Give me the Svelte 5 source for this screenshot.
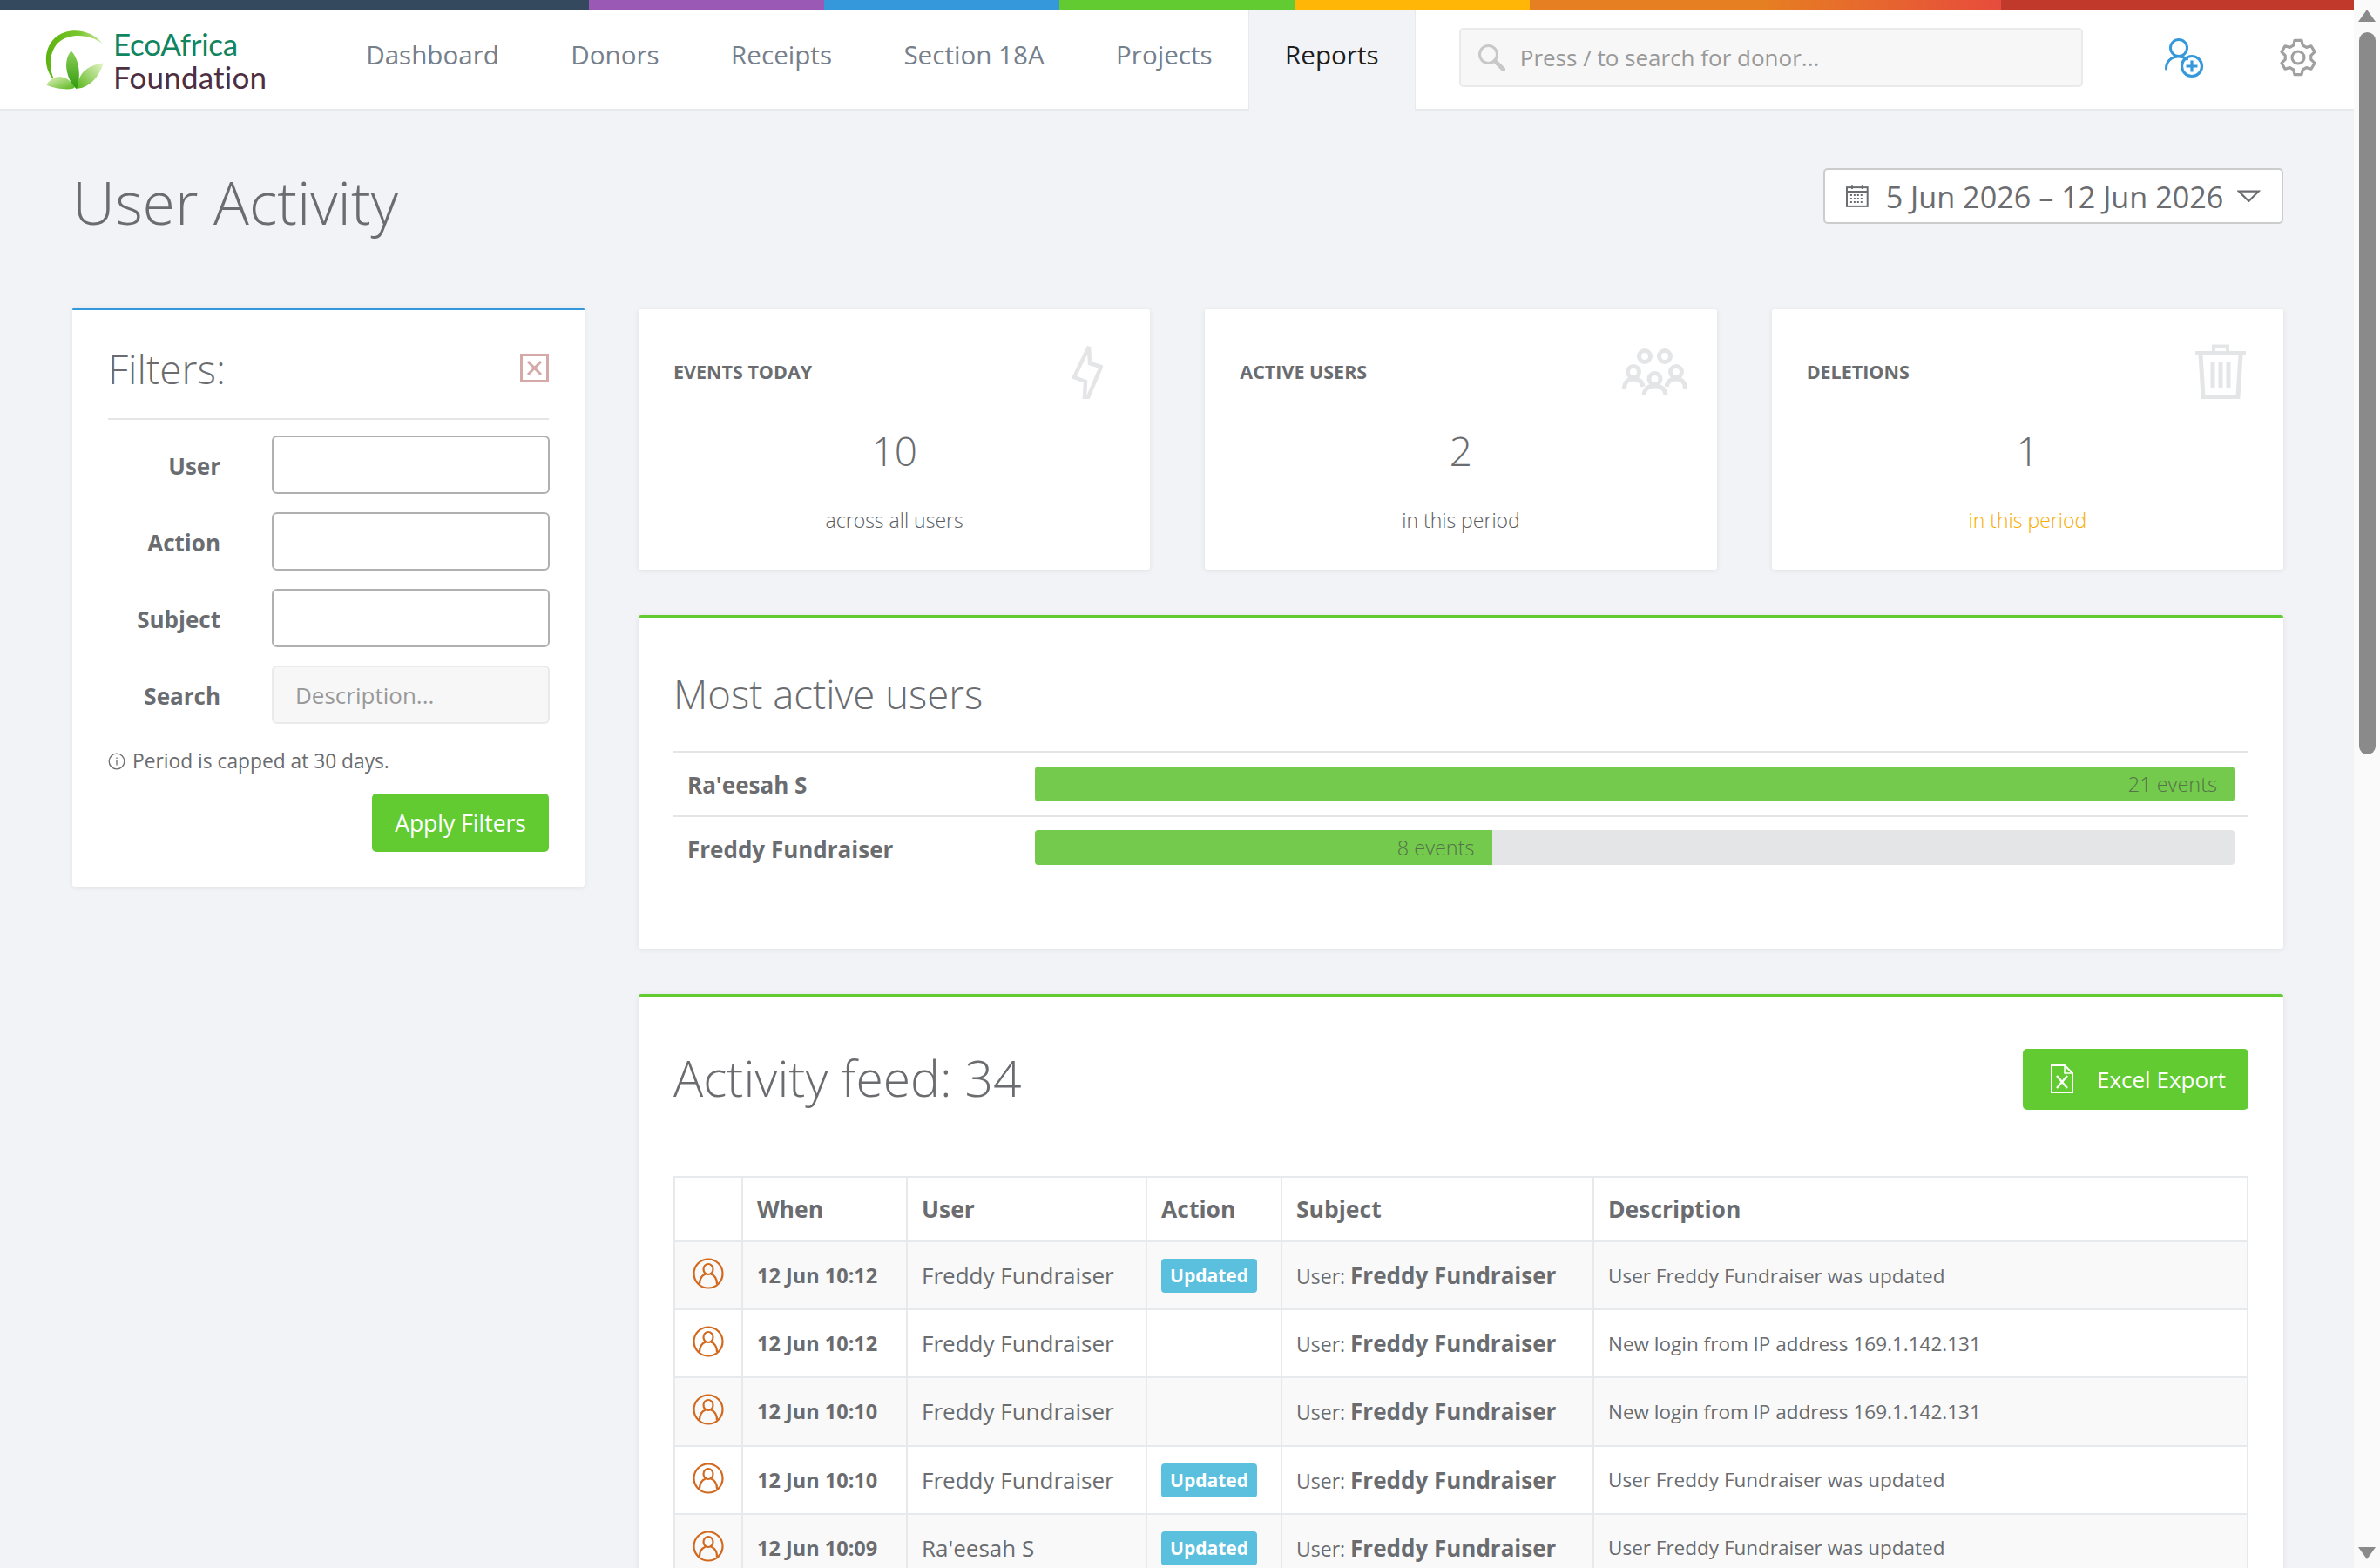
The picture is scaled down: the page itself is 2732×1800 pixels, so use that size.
<script>
	const navItems = ['Dashboard', 'Donors', 'Receipts', 'Section 18A', 'Projects', 'Reports'];

	const stats = [
		{ label: 'Events today', value: 10, note: 'across all users', icon: 'zap' },
		{ label: 'Active users', value: 2, note: 'in this period', icon: 'users' },
		{ label: 'Deletions', value: 1, note: 'in this period', icon: 'trash', warn: true }
	];

	const activeUsers = [
		{ name: "Ra'eesah S", events: 21 },
		{ name: 'Freddy Fundraiser', events: 8 }
	];
	const maxEvents = 21;

	const updated = 'User Freddy Fundraiser was updated';
	const login = 'New login from IP address 169.1.142.131';
	const feed = [
		{ when: '12 Jun 10:12', user: 'Freddy Fundraiser', action: 'Updated', desc: updated },
		{ when: '12 Jun 10:12', user: 'Freddy Fundraiser', action: '', desc: login },
		{ when: '12 Jun 10:10', user: 'Freddy Fundraiser', action: '', desc: login },
		{ when: '12 Jun 10:10', user: 'Freddy Fundraiser', action: 'Updated', desc: updated },
		{ when: '12 Jun 10:09', user: "Ra'eesah S", action: 'Updated', desc: updated }
	];

	// six-tooth cog outline, first tooth at twelve o'clock
	function gearPath(cx, cy, outer, inner) {
		const pts = [];
		for (let i = 0; i < 6; i++) {
			const a = (i * Math.PI) / 3 - Math.PI / 2;
			pts.push([a - 0.36, inner], [a - 0.2, outer], [a + 0.2, outer], [a + 0.36, inner]);
		}
		return (
			pts
				.map(([a, r], i) => `${i ? 'L' : 'M'}${(cx + r * Math.cos(a)).toFixed(1)} ${(cy + r * Math.sin(a)).toFixed(1)}`)
				.join(' ') + ' Z'
		);
	}
</script>

<div class="window">
	<div class="page">
		<div class="color-line"></div>

		<header class="topbar">
			<div class="logo">
				<svg class="logo-mark" viewBox="60 50 210 215" width="70" height="72">
					<defs>
						<linearGradient id="arc" x1="0" y1="0" x2="1" y2="0">
							<stop offset="0" stop-color="#5cb30f" />
							<stop offset="0.6" stop-color="#7cc72e" />
							<stop offset="1" stop-color="#cfe8a8" />
						</linearGradient>
						<linearGradient id="leafMid" x1="0" y1="0" x2="0" y2="1">
							<stop offset="0" stop-color="#8ed05a" />
							<stop offset="1" stop-color="#2e9a0c" />
						</linearGradient>
						<linearGradient id="leafSide" x1="1" y1="0" x2="0" y2="1">
							<stop offset="0" stop-color="#e6f5c8" />
							<stop offset="1" stop-color="#5db820" />
						</linearGradient>
						<linearGradient id="leafLeft" x1="0" y1="0" x2="1" y2="1">
							<stop offset="0" stop-color="#e2f3c0" />
							<stop offset="1" stop-color="#58b51c" />
						</linearGradient>
					</defs>
					<path d="M100 232 C58 190 58 118 100 80 C145 42 225 50 264 102 C222 68 150 62 110 98 C78 130 76 190 100 232 Z" fill="url(#arc)" />
					<path d="M70 243 C95 205 135 205 165 246 C180 262 110 262 70 243 Z" fill="url(#leafLeft)" />
					<path d="M178 256 C175 210 205 175 266 168 C250 215 222 250 178 256 Z" fill="url(#leafSide)" />
					<path d="M155 125 C178 150 192 200 175 258 C150 240 118 170 155 125 Z" fill="url(#leafMid)" />
				</svg>
				<div class="logo-text">
					<span class="eco">EcoAfrica</span>
					<span class="foundation">Foundation</span>
				</div>
			</div>

			<nav class="nav">
				{#each navItems as item}
					<a href="#top" class:active={item === 'Reports'}>{item}</a>
				{/each}
			</nav>

			<div class="search">
				<svg viewBox="0 0 32 32" width="32" height="32" fill="none" stroke="#c8c8c8">
					<circle cx="12.500" cy="12.500" r="10" stroke-width="3" />
					<path d="M20 20l10 10" stroke-width="5" stroke-linecap="round" />
				</svg>
				<span>Press / to search for donor...</span>
			</div>

			<div class="top-icons">
				<svg viewBox="0 0 46 46" width="46" height="46" fill="none" stroke="#3498db" stroke-width="3">
					<circle cx="17" cy="11" r="9.500" />
					<path d="M2.500 35c0-9 6.500-14 14.500-14 3.500 0 7 1 9.500 3" stroke-linecap="round" />
					<circle cx="32" cy="32" r="11.500" stroke-width="3.200" />
					<path d="M32 25.500v13M25.500 32h13" stroke-width="3.200" />
				</svg>
				<svg viewBox="0 0 44 44" width="44" height="44" fill="none" stroke="#a0a0a0" stroke-width="3.200">
					<path d={gearPath(22, 22, 20, 15)} stroke-linejoin="round" />
					<circle cx="22" cy="22" r="7" />
				</svg>
			</div>
		</header>

		<main class="content">
			<div class="title-row">
				<h1>User Activity</h1>
				<button class="date-btn">
					<svg viewBox="0 0 26 26" width="26" height="26" fill="none" stroke="#6a6c6f" stroke-width="2">
						<rect x="1" y="3" width="24" height="22" />
						<path d="M1 8h24M7 0v5M19 0v5" />
						<path d="M5 12h16M5 16h16M5 20h16" stroke-dasharray="2 2" />
					</svg>
					<span>5 Jun 2026 – 12 Jun 2026</span>
					<svg viewBox="0 0 27 14" width="27" height="14" fill="none" stroke="#6a6c6f" stroke-width="2.200">
						<path d="M2 1.500h23L13.500 13Z" />
					</svg>
				</button>
			</div>

			<div class="columns">
				<aside class="panel filters">
					<div class="filters-head">
						<h2>Filters:</h2>
						<svg viewBox="0 0 33 33" width="33" height="33" fill="none" stroke="#d6a9a9" stroke-width="3">
							<rect x="1.500" y="1.500" width="30" height="30" />
							<path d="M9 9l15 15M24 9L9 24" />
						</svg>
					</div>
					<div class="field"><label for="f-user">User</label><input id="f-user" /></div>
					<div class="field"><label for="f-action">Action</label><input id="f-action" /></div>
					<div class="field"><label for="f-subject">Subject</label><input id="f-subject" /></div>
					<div class="field">
						<label for="f-search">Search</label>
						<input id="f-search" class="soft" placeholder="Description..." />
					</div>
					<p class="hint">
						<svg viewBox="0 0 20 20" width="20" height="20" fill="none" stroke="#6a6c6f" stroke-width="1.300">
							<circle cx="10" cy="10" r="8.800" />
							<path d="M10 8.500v6M10 5.500v1.600" />
						</svg>
						Period is capped at 30 days.
					</p>
					<div class="apply"><button class="btn-green">Apply Filters</button></div>
				</aside>

				<div class="main-col">
					<div class="stats">
						{#each stats as s}
							<section class="stat">
								<div class="stat-head">
									<h4>{s.label}</h4>
									{#if s.icon === 'zap'}
										<svg class="zap" viewBox="0 0 36 63" width="36" height="63" fill="none" stroke="#e4e5e7" stroke-width="4.500">
											<path d="M20 3L3 38l13 5-1 18h4l15-35-13-4z" />
										</svg>
									{:else if s.icon === 'users'}
										<svg class="people" viewBox="0 0 75 54" width="75" height="54" fill="none" stroke="#e4e5e7" stroke-width="5">
											<circle cx="26" cy="9" r="6.500" />
											<circle cx="49" cy="9" r="6.500" />
											<circle cx="13" cy="27" r="6.500" />
											<circle cx="62" cy="27" r="6.500" />
											<circle cx="37.500" cy="35" r="6.500" />
											<path d="M2.500 46c0-7 4.500-11 10.500-11s10 3 11 9M51 44c1-6 5-9 11-9s10.500 4 10.500 11M25 54c0-7 5-11 12.500-11S50 47 50 54" />
										</svg>
									{:else}
										<svg class="bin" viewBox="0 0 58 63" width="58" height="63" fill="none" stroke="#e4e5e7">
											<path d="M0 10.500h58" stroke-width="5" />
											<path d="M21 8V2.500h16V8" stroke-width="4" />
											<path d="M6 12l3 48.500h40L52 12" stroke-width="5" />
											<path d="M20 21v29M29 21v29M38 21v29" stroke-width="5" />
										</svg>
									{/if}
								</div>
								<div class="stat-value">{s.value}</div>
								<div class="stat-note" class:warn={s.warn}>{s.note}</div>
							</section>
						{/each}
					</div>

					<section class="panel green most-active">
						<h3>Most active users</h3>
						<div class="bars">
							{#each activeUsers as u}
								<div class="bar-row">
									<strong>{u.name}</strong>
									<div class="track">
										<div class="fill" style="width: {(u.events / maxEvents) * 100}%">{u.events} events</div>
									</div>
								</div>
							{/each}
						</div>
					</section>

					<section class="panel green feed">
						<div class="feed-head">
							<h3>Activity feed: 34</h3>
							<button class="btn-green export">
								<svg viewBox="0 0 26 33" width="26" height="33" fill="none" stroke="#fff" stroke-width="2">
									<path d="M1 1h15l9 9v22H1z" />
									<path d="M16 1v9h9" stroke-width="1.500" />
									<path d="M7 13l12 14M19 13L7 27" stroke-width="2.400" />
								</svg>
								Excel Export
							</button>
						</div>
						<table>
							<colgroup>
								<col style="width: 78px" />
								<col style="width: 189px" />
								<col style="width: 275px" />
								<col style="width: 155px" />
								<col style="width: 358px" />
								<col />
							</colgroup>
							<thead>
								<tr><th></th><th>When</th><th>User</th><th>Action</th><th>Subject</th><th>Description</th></tr>
							</thead>
							<tbody>
								{#each feed as row}
									<tr>
										<td class="avatar">
											<svg viewBox="0 0 36 36" width="36" height="36" fill="none" stroke="#d2691e" stroke-width="2.200">
												<circle cx="18" cy="18" r="16.500" />
												<ellipse cx="18" cy="13" rx="5.500" ry="6" />
												<path d="M8 30c0-6 3-10 7-11.500M28 30c0-6-3-10-7-11.500" />
											</svg>
										</td>
										<td class="when">{row.when}</td>
										<td class="user">{row.user}</td>
										<td>{#if row.action}<span class="badge">{row.action}</span>{/if}</td>
										<td class="subject">User: <b>Freddy Fundraiser</b></td>
										<td class="desc">{row.desc}</td>
									</tr>
								{/each}
							</tbody>
						</table>
					</section>
				</div>
			</div>
		</main>
	</div>

	<div class="scrollbar" aria-hidden="true">
		<div class="arrow up"></div>
		<div class="thumb"></div>
		<div class="arrow down"></div>
	</div>
</div>

<style>
	:global(body) {
		margin: 0;
		background: #f1f3f6;
	}

	.window {
		display: flex;
		height: 1800px;
		overflow: hidden;
		font-family: 'Open Sans', sans-serif;
		font-size: 23px;
		color: #6a6c6f;
	}

	.page {
		flex: 1;
		min-width: 0;
		overflow: hidden;
	}

	.color-line {
		height: 12px;
		background: linear-gradient(
			to right,
			#34495e 25%,
			#9b59b6 25%,
			#9b59b6 35%,
			#3498db 35%,
			#3498db 45%,
			#62cb31 45%,
			#62cb31 55%,
			#ffb606 55%,
			#ffb606 65%,
			#e67e22 65%,
			#e67e22 75%,
			#e74c3c 85%,
			#c0392b 85%,
			#c0392b 100%
		);
	}

	.topbar {
		display: flex;
		align-items: stretch;
		height: 113px;
		background: #fff;
		border-bottom: 2px solid #e7eaec;
	}

	.logo {
		width: 379px;
		padding-left: 50px;
		box-sizing: border-box;
		display: flex;
		align-items: center;
		gap: 10px;
	}

	.logo-text {
		display: flex;
		flex-direction: column;
		font-family: Lato, sans-serif;
		font-size: 35px;
		line-height: 38px;
	}

	.eco {
		color: #0f8560;
		letter-spacing: -0.3px;
	}

	.foundation {
		color: #4d2f42;
		letter-spacing: 0.2px;
	}

	.nav {
		display: flex;
		margin-bottom: -2px;
	}

	.nav a {
		display: flex;
		align-items: center;
		padding: 0 41.200px 14px;
		font-size: 29.600px;
		color: #76808c;
		text-decoration: none;
	}

	.nav a.active {
		color: #1f1f1f;
		background: #f1f3f6;
		border-left: 1px solid #e7eaec;
		border-right: 1px solid #e7eaec;
	}

	.search {
		width: 716px;
		height: 68px;
		margin: 20px 0 0 50px;
		box-sizing: border-box;
		display: flex;
		align-items: center;
		gap: 17px;
		padding-left: 19px;
		background: #f7f7f7;
		border: 2px solid #e9eaeb;
		border-radius: 5px;
		font-size: 26px;
		color: #999;
	}

	.top-icons {
		display: flex;
		gap: 86px;
		margin-left: 93px;
		padding-top: 32px;
		align-items: flex-start;
	}

	.content {
		padding: 0 81px 0 83px;
	}

	.title-row {
		display: flex;
		justify-content: space-between;
		align-items: flex-start;
		height: 226px;
	}

	h1 {
		margin: 64px 0 0;
		font-size: 68px;
		font-weight: 300;
		line-height: 82px;
	}

	.date-btn {
		margin-top: 66px;
		width: 528px;
		height: 64px;
		display: flex;
		align-items: center;
		gap: 16px;
		padding: 0 24px;
		box-sizing: border-box;
		background: #fff;
		border: 2px solid #ccc;
		border-radius: 5px;
		font: inherit;
		font-size: 34.200px;
		color: #6a6c6f;
		white-space: nowrap;
	}

	.date-btn span {
		margin-left: 4px;
	}

	.columns {
		display: grid;
		grid-template-columns: 588px 1fr;
		gap: 62px;
		align-items: start;
	}

	.panel {
		background: #fff;
		border-top: 3px solid #3498db;
		border-radius: 3px;
		box-shadow: 0 1px 6px rgba(0, 0, 0, 0.08);
		box-sizing: border-box;
	}

	.panel.green {
		border-top-color: #62cb31;
	}

	.filters {
		height: 665px;
		padding: 0 41px;
	}

	.filters-head {
		display: flex;
		justify-content: space-between;
		align-items: center;
		height: 126px;
		padding-top: 9px;
		box-sizing: border-box;
		margin-bottom: 18px;
		border-bottom: 2px solid #e4e5e7;
	}

	h2 {
		margin: 0;
		font-size: 46px;
		font-weight: 300;
	}

	.field {
		display: grid;
		grid-template-columns: 129px 319px;
		gap: 59px;
		align-items: center;
		margin-bottom: 21px;
	}

	.field label {
		padding-top: 3px;
		text-align: right;
		font-size: 26px;
		font-weight: 700;
	}

	.field input {
		height: 67px;
		box-sizing: border-box;
		padding: 0 25px;
		background: #fff;
		border: 2px solid #b0b0b0;
		border-radius: 6px;
		font: inherit;
		font-size: 26px;
		outline: none;
	}

	.field input.soft {
		background: #f7f7f7;
		border-color: #e9eaeb;
	}

	.field input::placeholder {
		color: #999;
	}

	.hint {
		display: flex;
		align-items: center;
		gap: 8px;
		margin: 0;
		padding-top: 6px;
		font-size: 22.750px;
		color: #6a6c6f;
	}

	.apply {
		display: flex;
		justify-content: flex-end;
		margin-top: 22px;
	}

	.btn-green {
		height: 67px;
		padding: 0 26px;
		background: #62cb31;
		border: 0;
		border-radius: 5px;
		font: inherit;
		font-size: 26.500px;
		color: #fff;
	}

	.stats {
		display: grid;
		grid-template-columns: repeat(3, 1fr);
		gap: 63px;
		margin: 2px 0 52px;
	}

	.stat {
		height: 299px;
		padding: 0 40px;
		box-sizing: border-box;
		background: #fff;
		border-radius: 3px;
		box-shadow: 0 1px 6px rgba(0, 0, 0, 0.08);
		text-align: center;
	}

	.stat-head {
		position: relative;
		height: 132px;
	}

	h4 {
		margin: 0;
		padding-top: 57px;
		text-align: left;
		font-size: 21.500px;
		font-weight: 700;
		text-transform: uppercase;
	}

	/* stat icons sit over the card corner */
	.stat-head svg {
		position: absolute;
		top: 40px;
		right: 14px;
	}

	.stat-head .people {
		top: 45px;
		right: -6px;
	}

	.stat-head .bin {
		right: 3px;
	}

	.stat-value {
		font-size: 46px;
		font-weight: 300;
		line-height: 60px;
	}

	.stat-note {
		margin-top: 34px;
		font-size: 23px;
		font-weight: 300;
		line-height: 32px;
		color: #5a5c5f;
	}

	.stat-note.warn {
		color: #f7ad00;
	}

	.most-active {
		height: 383px;
		padding: 0 40px;
		margin-bottom: 52px;
	}

	h3 {
		margin: 0;
		font-weight: 300;
		font-size: 45.500px;
	}

	.most-active h3 {
		padding-top: 55px;
		line-height: 64px;
		margin-bottom: 34px;
	}

	.bars {
		border-top: 2px solid #e4e5e7;
	}

	.bar-row {
		display: grid;
		grid-template-columns: 399px 1fr;
		align-items: center;
		height: 71.500px;
		padding: 0 16px;
		font-size: 26px;
	}

	.bar-row strong {
		padding-top: 3px;
	}

	.bar-row + .bar-row {
		border-top: 2px solid #e4e5e7;
	}

	.track {
		height: 40px;
		background: #e4e5e7;
		border-radius: 4px;
		overflow: hidden;
	}

	.fill {
		height: 100%;
		box-sizing: border-box;
		padding-right: 20px;
		background: #74ca4c;
		text-align: right;
		font-size: 23.500px;
		line-height: 40px;
		color: #55734a;
		font-weight: 300;
	}

	.feed {
		padding: 0 40px;
		min-height: 800px;
	}

	.feed-head {
		display: flex;
		justify-content: space-between;
		align-items: center;
		padding-top: 57px;
		margin-bottom: 74px;
	}

	.feed-head h3 {
		margin-top: -3px;
		font-size: 57px;
	}

	.export {
		display: flex;
		align-items: center;
		gap: 27px;
		width: 259px;
		height: 70px;
		padding: 0 0 0 32px;
		box-sizing: border-box;
		font-size: 26px;
	}

	table {
		width: 100%;
		border-collapse: collapse;
		table-layout: fixed;
	}

	th,
	td {
		box-sizing: border-box;
		border: 2px solid #e7eaec;
		padding: 0 16px;
		text-align: left;
	}

	th {
		height: 74px;
		font-size: 26.500px;
		font-weight: 700;
		background: #fff;
	}

	td {
		height: 78.200px;
		font-size: 26px;
	}

	tbody tr:nth-child(odd) td {
		background: #f9f9f9;
	}

	tbody tr:nth-child(even) td {
		background: #fff;
	}

	.avatar {
		padding: 0 0 4px 20px;
	}

	.avatar svg {
		display: block;
	}

	.when {
		font-size: 23.500px;
		font-weight: 700;
	}

	.subject {
		font-size: 23px;
	}

	.subject b {
		font-size: 26px;
		font-weight: 700;
	}

	.desc {
		font-size: 22.500px;
	}

	.badge {
		display: inline-block;
		width: 110px;
		line-height: 39px;
		text-align: center;
		background: #5bc0de;
		border-radius: 4px;
		font-size: 21px;
		font-weight: 700;
		color: #fff;
		vertical-align: middle;
	}

	.scrollbar {
		width: 30px;
		flex: none;
		position: relative;
		background: #fafafa;
	}

	.thumb {
		margin: 37px 5px 0 6px;
		height: 829px;
		background: #8a8a8a;
		border-radius: 10px;
	}

	.arrow {
		position: absolute;
		left: 5px;
		border-left: 10px solid transparent;
		border-right: 10px solid transparent;
	}

	.arrow.up {
		top: 11px;
		border-bottom: 14px solid #8a8a8a;
	}

	.arrow.down {
		bottom: 10px;
		border-top: 14px solid #8a8a8a;
	}
</style>
